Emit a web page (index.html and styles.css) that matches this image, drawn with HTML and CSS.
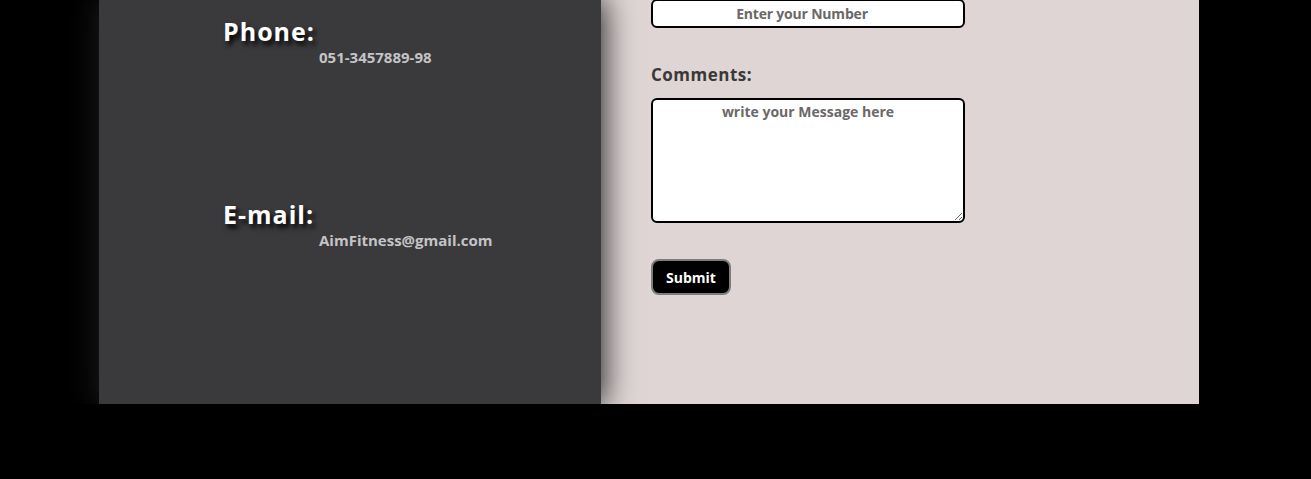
FILE: index.html
```html
<!DOCTYPE html>
<html>
<head>
<meta charset="utf-8">
<link rel="stylesheet" href="styles.css">
</head>
<body>
<div class="contact">
  <div class="info">
    <h2 class="info-title">Phone:</h2>
    <p class="info-text">051-3457889-98</p>
    <h2 class="info-title info-title-mail">E-mail:</h2>
    <p class="info-text">AimFitness@gmail.com</p>
  </div>
  <form class="form">
    <input class="field" type="text" placeholder="Enter your Number">
    <label class="label">Comments:</label>
    <textarea class="message" placeholder="write your Message here"></textarea>
    <button class="submit" type="button">Submit</button>
  </form>
</div>
</body>
</html>
```
FILE: styles.css
```css
html, body {
  margin: 0;
  padding: 0;
  background: #000;
  font-family: "Open Sans", "DejaVu Sans", sans-serif;
}
.contact {
  display: flex;
  width: 1100px;
  height: 404px;
  margin-left: 99px;
}
.info {
  position: relative;
  z-index: 1;
  width: 502px;
  background: #3a3a3c;
  box-shadow: 0 0 30px 2px #1c1c1c;
  display: flex;
  flex-direction: column;
  padding: 16px 0 0 124px;
  box-sizing: border-box;
}
.info-title {
  margin: 0;
  font-size: 25px;
  line-height: 30px;
  font-weight: 700;
  letter-spacing: 1px;
  color: #fff;
  text-shadow: 3px 4px 5px #000;
}
.info-title-mail {
  margin-top: 132px;
}
.info-text {
  margin: 1px 0 0 96px;
  font-size: 15px;
  line-height: 20px;
  font-weight: 700;
  color: #c4c4c6;
}
.form {
  flex: 1;
  background: #dfd5d5;
  display: flex;
  flex-direction: column;
  align-items: flex-start;
  padding: 0 0 0 50px;
  margin: 0;
}
.field {
  margin-top: -1px;
  width: 314px;
  height: 29px;
  box-sizing: border-box;
  border: 2px solid #000;
  border-radius: 6px;
  background: #fff;
  text-align: center;
  font-family: inherit;
  font-size: 14px;
  font-weight: 700;
  letter-spacing: -0.2px;
  padding: 0 12px 0 0;
}
.field::placeholder, .message::placeholder {
  color: #6b6868;
  opacity: 1;
}
.label {
  margin-top: 35px;
  font-size: 17px;
  line-height: 24px;
  font-weight: 700;
  letter-spacing: 0.5px;
  color: #3b3838;
}
.message {
  margin-top: 11px;
  width: 314px;
  height: 125px;
  box-sizing: border-box;
  border: 2px solid #000;
  border-radius: 6px;
  background: #fff;
  text-align: center;
  font-family: inherit;
  font-size: 14px;
  font-weight: 700;
  padding: 2px;
}
.submit {
  margin-top: 36px;
  width: 80px;
  height: 36px;
  box-sizing: border-box;
  background: #000;
  color: #fff;
  border: 2px solid #7d7d7d;
  border-radius: 8px;
  font-family: inherit;
  font-size: 14px;
  font-weight: 700;
  padding: 0;
}
```
